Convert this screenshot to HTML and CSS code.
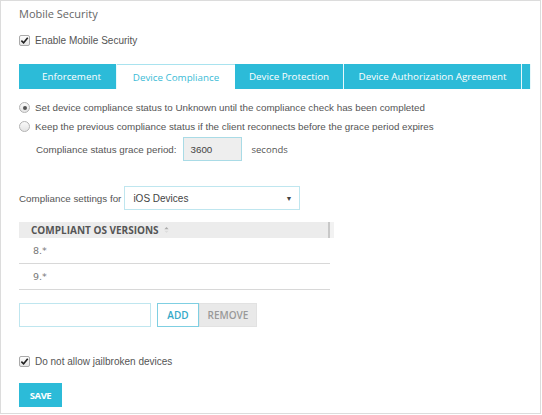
FILE: index.html
```html
<!DOCTYPE html>
<html>
<head>
<meta charset="utf-8">
<link rel="stylesheet" href="styles.css">
</head>
<body>
<div class="frame">
  <div class="title">Mobile Security</div>
  <label class="check-row top-check">
    <span class="cbox"><svg viewBox="0 0 10 10" width="9" height="9"><path d="M1.5 5.2 L4 7.6 L8.6 2" fill="none" stroke="#222" stroke-width="1.8"/></svg></span>
    <span>Enable Mobile Security</span>
  </label>

  <div class="tabs">
    <div class="tab t1">Enforcement</div>
    <div class="tab t2 active">Device Compliance</div>
    <div class="tab t3">Device Protection</div>
    <div class="tab t4">Device Authorization Agreement</div>
    <div class="tab t5"></div>
  </div>

  <div class="radios">
    <div class="radio-row"><span class="radio on"></span><span>Set device compliance status to Unknown until the compliance check has been completed</span></div>
    <div class="radio-row"><span class="radio"></span><span>Keep the previous compliance status if the client reconnects before the grace period expires</span></div>
    <div class="grace">
      <span>Compliance status grace period:</span>
      <span class="num-input">3600</span>
      <span class="unit">seconds</span>
    </div>
  </div>

  <div class="settings-for">
    <span>Compliance settings for</span>
    <div class="select"><span>iOS Devices</span><span class="caret">&#9660;</span></div>
  </div>

  <div class="table">
    <div class="thead"><span>COMPLIANT OS VERSIONS</span><svg class="sort" viewBox="0 0 6 9" width="5" height="8"><path d="M0.5 3.5 L3 0.8 L5.5 3.5 Z" fill="#aaa"/><path d="M0.5 5.5 L3 8.2 L5.5 5.5 Z" fill="#ddd"/></svg></div>
    <div class="trow">8.*</div>
    <div class="trow">9.*</div>
  </div>

  <div class="add-row">
    <div class="text-input"></div>
    <div class="btn add">ADD</div>
    <div class="btn remove">REMOVE</div>
  </div>

  <label class="check-row jail">
    <span class="cbox"><svg viewBox="0 0 10 10" width="9" height="9"><path d="M1.5 5.2 L4 7.6 L8.6 2" fill="none" stroke="#222" stroke-width="1.8"/></svg></span>
    <span>Do not allow jailbroken devices</span>
  </label>

  <div class="save">SAVE</div>
</div>
</body>
</html>
```

FILE: styles.css
```css
* { box-sizing: border-box; }
html, body { margin: 0; padding: 0; background: #fff; }
.frame {
  width: 541px;
  height: 414px;
  border: 1px solid #dcdcdc;
  padding: 0 0 0 18px;
  font-family: "Liberation Sans", Arial, sans-serif;
  font-size: 9.8px;
  color: #555;
}
.title {
  font-family: "Open Sans", sans-serif;
  font-size: 11px;
  color: #666;
  padding-top: 5px;
  height: 30px;
  line-height: 16px;
}
.check-row {
  display: flex;
  align-items: center;
  gap: 5px;
  font-family: "Liberation Sans", Arial, sans-serif;
  font-size: 10px;
  color: #555;
}
.top-check { height: 18px; }
.cbox {
  width: 11px; height: 11px;
  border: 1px solid #aaa;
  border-radius: 2px;
  background: linear-gradient(#fdfdfd, #e6e6e6);
  display: flex; align-items: center; justify-content: center;
}
.tabs {
  display: flex;
  margin-top: 15px;
  height: 25px;
}
.tab {
  background: #2cbbd8;
  color: #fff;
  font-family: "Open Sans", sans-serif;
  font-size: 9.8px;
  display: flex; align-items: center; justify-content: center;
  border-right: 1px solid #e8f8fb;
}
.t1 { width: 98px; padding-left: 8px; }
.t2 { width: 118px; }
.t3 { width: 109px; }
.t4 { width: 178px; }
.t5 { width: 9px; }
.tab.active {
  background: #fff;
  color: #3bbbd6;
  border-top: 1px solid #a9e3ef;
  border-right: 0;
}
.radios { padding-top: 9px; }
.radio-row {
  display: flex; align-items: center; gap: 5px;
  height: 19px;
  color: #555;
}
.radio {
  width: 11px; height: 11px;
  border-radius: 50%;
  border: 1px solid #b3b3b3;
  background: linear-gradient(#fafafa, #e4e4e4);
  display: flex; align-items: center; justify-content: center;
}
.radio.on::after {
  content: "";
  width: 4px; height: 4px;
  border-radius: 50%;
  background: #555;
}
.grace {
  display: flex; align-items: center;
  padding-left: 17px;
  margin-top: 1px;
  height: 24px;
}
.num-input {
  margin-left: 6px;
  width: 59px; height: 24px;
  border: 1px solid #a9dbe6;
  background: #eeeeee;
  display: flex; align-items: center;
  padding-left: 7px;
  color: #444;
}
.unit { margin-left: 10px; font-family: "Open Sans", sans-serif; font-size: 9.5px; }
.settings-for {
  display: flex; align-items: center;
  margin-top: 25px;
  height: 24px;
}
.select {
  margin-left: 3px;
  width: 176px; height: 24px;
  border: 1px solid #bfe6ef;
  display: flex; align-items: center; justify-content: space-between;
  padding: 0 7px 0 8px;
  color: #444;
  font-size: 10px;
}
.caret { font-size: 7px; color: #444; }
.table {
  margin-top: 12px;
  width: 311px;
}
.thead {
  height: 16px;
  background: #ececec;
  border-right: 2px solid #c8c8c8;
  box-shadow: 4px 0 0 #f2f2f2;
  display: flex; align-items: center; gap: 5px;
  padding-left: 12px;
  font-family: "Open Sans", sans-serif;
  font-weight: 700;
  font-size: 10px;
  color: #555;
}
.trow {
  height: 26px;
  border-bottom: 1px solid #d8d8d8;
  display: flex; align-items: center;
  padding-left: 14px;
  font-family: "DejaVu Sans", sans-serif;
  font-size: 9.5px;
  color: #777;
}
.add-row {
  display: flex;
  margin-top: 13px;
  height: 24px;
}
.text-input {
  width: 132px; height: 24px;
  border: 1px solid #bfe6ef;
  margin-right: 6px;
}
.btn {
  display: flex; align-items: center; justify-content: center;
  font-family: "Open Sans", sans-serif;
  font-weight: 600;
  font-size: 10px;
  height: 24px;
}
.add { width: 42px; border: 1px solid #7fcfe2; color: #34a9c8; background: #fff; }
.remove { width: 58px; background: #e9e9e9; color: #999; border: 1px solid #e2e2e2; }
.jail { margin-top: 25px; height: 18px; }
.save {
  margin-top: 13px;
  width: 43px; height: 24px;
  background: #2cbbd8;
  color: #fff;
  font-family: "Open Sans", sans-serif;
  font-weight: 700;
  font-size: 9.5px;
  letter-spacing: -0.5px;
  display: flex; align-items: center; justify-content: center;
}
```
